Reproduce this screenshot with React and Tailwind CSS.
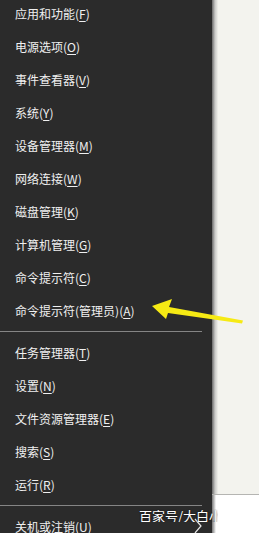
import React from 'react';

const groupOne = [
    ['应用和功能', 'F'],
    ['电源选项', 'O'],
    ['事件查看器', 'V'],
    ['系统', 'Y'],
    ['设备管理器', 'M'],
    ['网络连接', 'W'],
    ['磁盘管理', 'K'],
    ['计算机管理', 'G'],
    ['命令提示符', 'C'],
    ['命令提示符(管理员)', 'A'],
];

const groupTwo = [
    ['任务管理器', 'T'],
    ['设置', 'N'],
    ['文件资源管理器', 'E'],
    ['搜索', 'S'],
    ['运行', 'R'],
];

const MenuItem = ({ label, hotkey }) => (
    <div className="h-[33px] flex items-center pl-[15px] text-[12px] leading-none text-[#f0f0f0]">
        <span>
            {label}(<span className="underline underline-offset-2">{hotkey}</span>)
        </span>
    </div>
);

const Separator = () => (
    <div className="my-[4px] h-px w-[202px] bg-[#858585]"></div>
);

const App = () => {
    return (
        <div
            className="relative w-[259px] h-[533px] overflow-hidden flex"
            style={{ fontFamily: '"Noto Sans CJK SC", "Noto Sans", sans-serif' }}
        >
            {/* Win+X menu */}
            <div className="w-[212px] h-full bg-[#2b2b2b]">
                <div className="flex flex-col -mt-[3px]">
                    {groupOne.map(([label, key]) => (
                        <MenuItem key={key} label={label} hotkey={key} />
                    ))}
                    <Separator />
                    {groupTwo.map(([label, key]) => (
                        <MenuItem key={key} label={label} hotkey={key} />
                    ))}
                    <Separator />
                    <MenuItem label="关机或注销" hotkey="U" />
                </div>
            </div>

            {/* Desktop behind */}
            <div className="flex-1 h-full flex flex-col">
                <div className="h-[495px] flex border-b border-[#b5b5b2]">
                    <div className="w-[6px] h-full bg-gradient-to-r from-[#6a6a6a] via-[#c8c8c6] to-[#f1f1ec]"></div>
                    <div className="flex-1 bg-[#f3f3ee]"></div>
                </div>
                <div className="flex-1 flex">
                    <div className="w-[4px] h-full bg-gradient-to-r from-[#7a7a7a] to-[#ffffff]"></div>
                    <div className="flex-1 bg-white"></div>
                </div>
            </div>

            {/* submenu chevron */}
            <svg className="absolute left-[193px] top-[518px]" width="10" height="16" viewBox="0 0 10 16">
                <path d="M2 1 L8 8 L2 15" fill="none" stroke="#e6e6e6" strokeWidth="1.2" />
            </svg>

            {/* yellow arrow */}
            <svg className="absolute left-0 top-0 pointer-events-none" width="259" height="533" viewBox="0 0 259 533">
                <polygon
                    points="152,306 172,299 169,307 243,320.5 242,323.5 168,313 166,319"
                    fill="#f6ea14"
                />
            </svg>

            {/* watermark */}
            <div className="absolute left-[139px] top-[509px] w-[79px] overflow-hidden text-[13px] leading-none text-white [text-shadow:0_0_2px_rgba(0,0,0,0.8)] whitespace-nowrap">
                百家号/大白小
            </div>
        </div>
    );
};

export default App;
